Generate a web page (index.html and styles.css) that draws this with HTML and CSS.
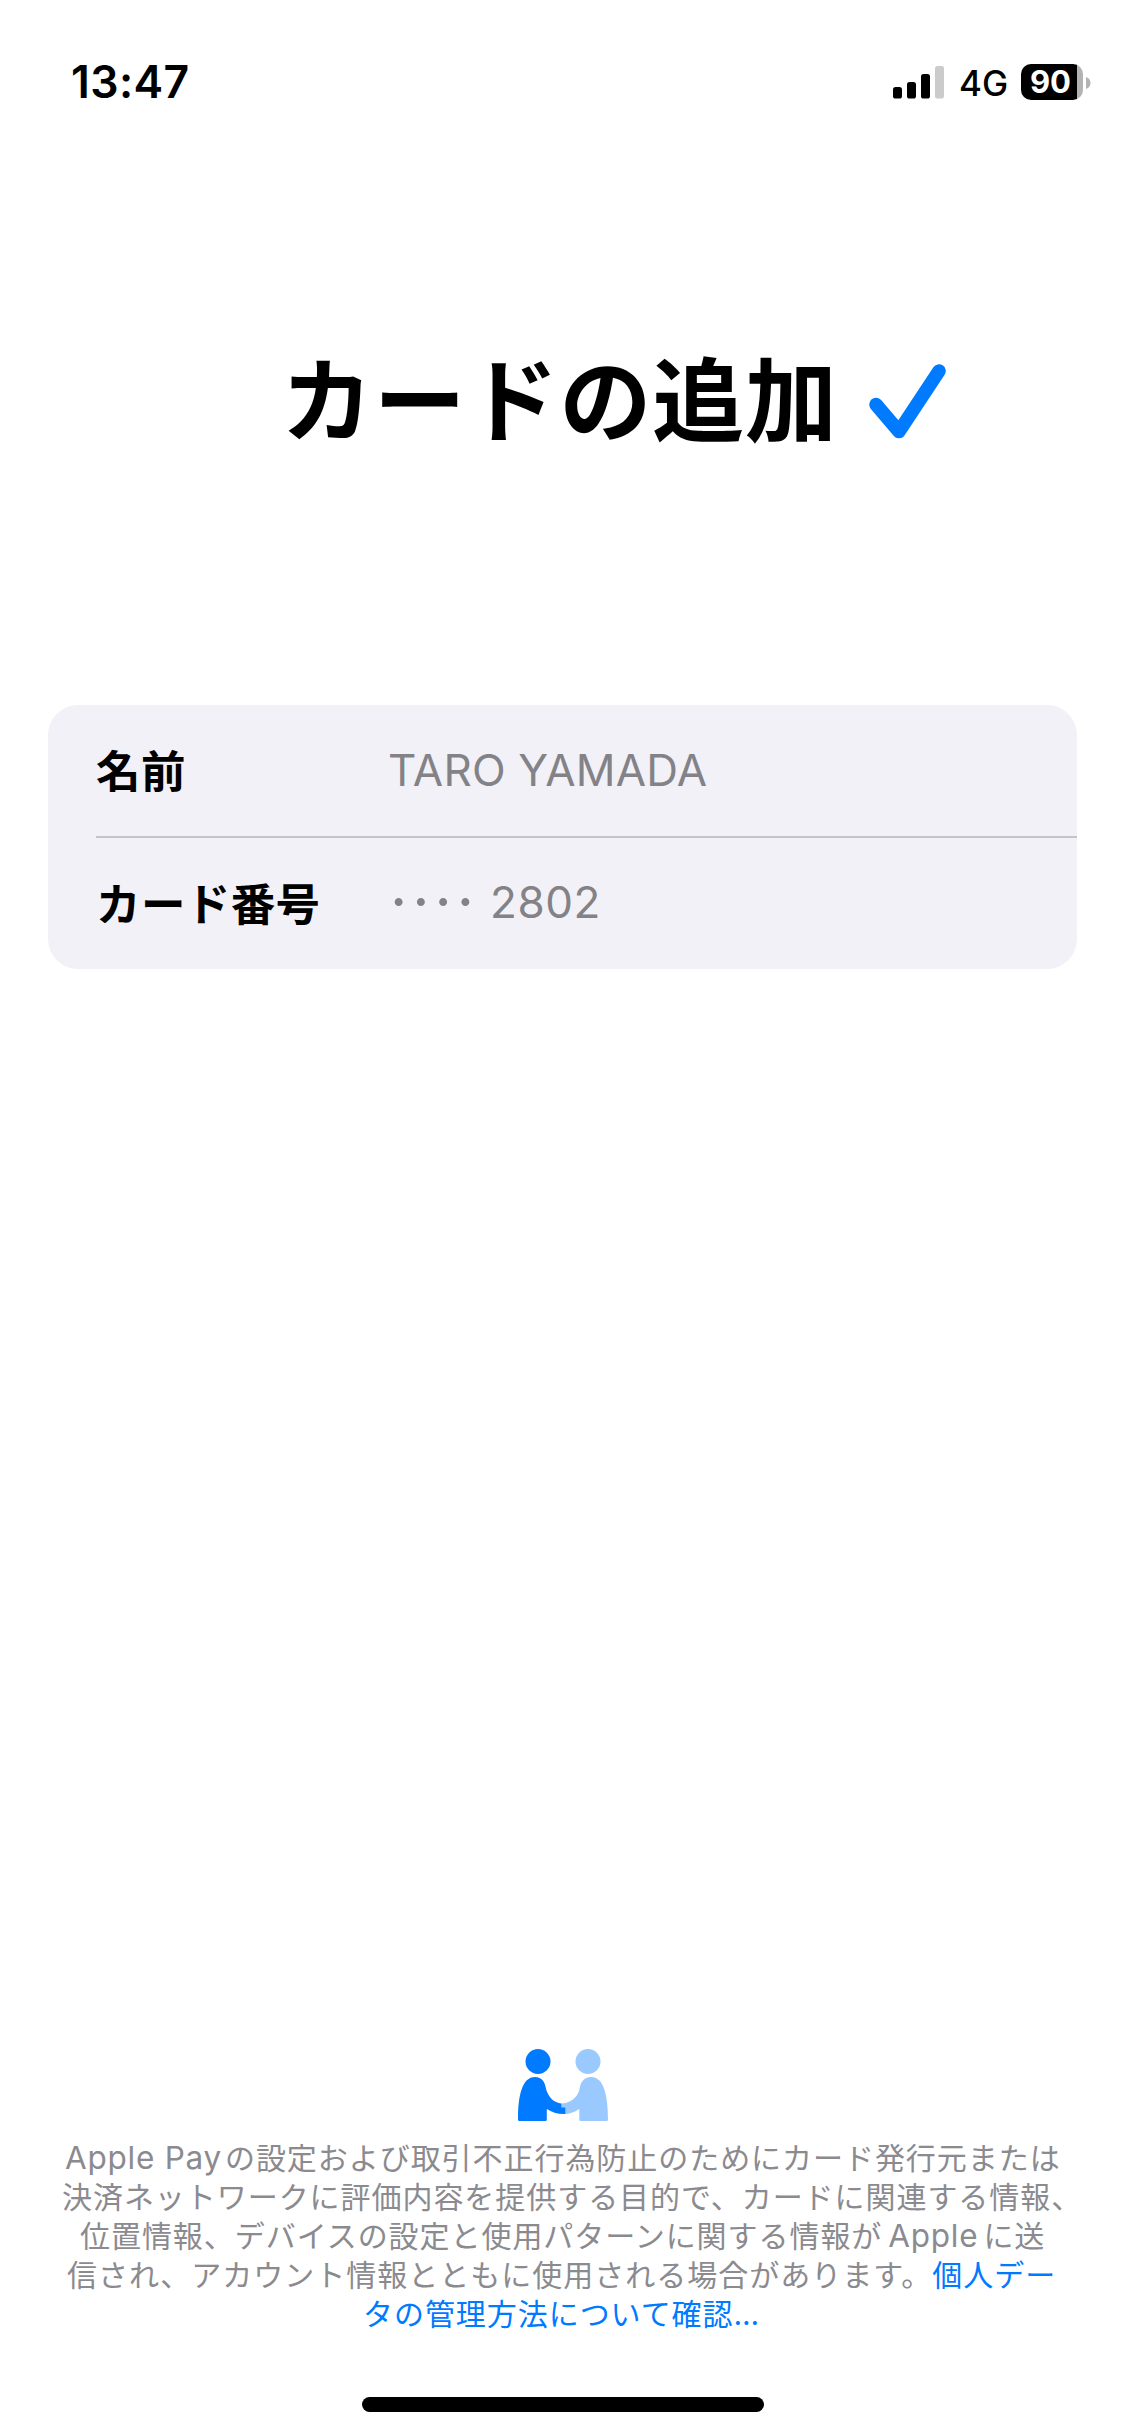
FILE: index.html
```html
<!DOCTYPE html>
<html lang="ja">
<head>
<meta charset="utf-8">
<title>カードの追加</title>
<link rel="stylesheet" href="styles.css">
</head>
<body>
<div class="screen">
  <header class="status">
    <div class="time">13:47</div>
    <div class="indicators">
      <svg class="signal" width="52" height="33" viewBox="0 0 52 33">
        <rect x="0" y="21" width="9" height="11.5" rx="2.6"/>
        <rect x="14" y="16" width="9" height="16.5" rx="2.6"/>
        <rect x="28" y="8" width="9" height="24.5" rx="2.6"/>
        <rect x="42" y="0" width="9" height="32.5" rx="2.6" fill="#cbcbcb"/>
      </svg>
      <span class="network">4G</span>
      <div class="battery"><span class="level">90</span></div>
      <svg class="nub" width="5" height="12" viewBox="0 0 5 12"><path d="M0 0C3 1 4.500 3.300 4.500 6S3 11 0 12Z" fill="#b3b3b3"/></svg>
    </div>
  </header>
  <main class="content">
    <h1 class="title"><span class="title-text">カードの追加</span>
      <svg class="check" width="78" height="77" viewBox="0 0 78 77"><path d="M7 40.500L30 67.500L70 7" fill="none" stroke="#007aff" stroke-width="13.500" stroke-linecap="round" stroke-linejoin="round"/></svg>
    </h1>
    <dl class="card">
      <div class="row"><dt>名前</dt><dd>TARO YAMADA</dd></div>
      <div class="row"><dt>カード番号</dt><dd class="number"><span class="dots">····</span><span>2802</span></dd></div>
    </dl>
  </main>
  <footer class="privacy">
    <svg class="people" width="90" height="72" viewBox="0 0 90 72">
      <g fill="#99c9ff">
        <circle cx="70" cy="12.500" r="12.500"/>
        <path d="M43 54.500C52 54.500 59 49 61.300 41C62.500 33 66 28 73 28C86 28 90 47 90 70.500Q90 72 88.500 72H62.500Q61.300 72 61.300 70.500V60C56 63.500 51 65 47 65H43Z"/>
      </g>
      <g fill="#007aff">
        <circle cx="20" cy="12.500" r="12.500"/>
        <path d="M0 70.500C0 47 4 28 17 28C24 28 27 33 28.300 41C31 49 36 53.500 43.300 54.500V58.500H47.300V65C41 65.500 34 63.500 28.800 60V70.500Q28.800 72 27.300 72H1.500Q0 72 0 70.500Z"/>
      </g>
    </svg>
    <p class="notice">
      <span class="line l1"><span class="latin pay">Apple Pay</span>の設定および取引不正行為防止のためにカード発行元または</span>
      <span class="line l2">決済ネットワークに評価内容を提供する目的で、カードに関連する情報、</span>
      <span class="line l3">位置情報、デバイスの設定と使用パターンに関する情報が<span class="latin apple">Apple</span>に送</span>
      <span class="line l4">信され、アカウント情報とともに使用される場合があります。<a class="link">個人デー</a></span>
      <span class="line l5"><a class="link">タの管理方法について確認<span class="ellipsis">...</span></a></span>
    </p>
    <div class="home"></div>
  </footer>
</div>
</body>
</html>
```
FILE: styles.css
```css
* { box-sizing: border-box; margin: 0; padding: 0; }
body {
  background: #fff;
  color: #000;
  font-family: Inter, "Noto Sans CJK JP", sans-serif;
}
.screen { width: 1125px; height: 2436px; display: flex; flex-direction: column; overflow: hidden; }

.status { height: 132px; padding: 32px 34px 0 71px; display: flex; justify-content: space-between; align-items: flex-start; }
.time { margin-top: 24px; line-height: 52px; font-size: 44.5px; font-weight: 600; letter-spacing: .4px; }
.indicators { display: flex; align-items: center; height: 36px; margin-top: 32px; }
.signal { margin-right: 14px; margin-top: 1px; }
.network { width: 62px; font-size: 35px; line-height: 36px; font-weight: 450; margin-top: 2px; }
.battery {
  width: 62px; height: 36px; border-radius: 10px; padding-right: 3px;
  background: linear-gradient(90deg, #000 56px, #b3b3b3 56px);
  display: flex; justify-content: center; align-items: center;
}
.level { color: #fff; font-size: 31px; font-weight: 700; line-height: 36px; }
.nub { margin-left: 3px; margin-top: 1px; }

.content { padding: 216px 48px 0; }
.title { display: flex; height: 136px; padding-left: 233px; font-size: 92px; font-weight: 700; line-height: 108px; white-space: nowrap; }
.title-text { width: 557px; letter-spacing: .8px; }
.check { margin: 16px 0 0 31px; }

.card { margin-top: 221px; height: 264px; border-radius: 30px; background: #f2f1f7; padding-left: 48px; }
.row { display: flex; align-items: center; height: 131px; }
.row + .row { border-top: 2px solid #c4c4c9; height: 133px; }
dt { width: 292px; font-size: 44.5px; line-height: 60px; font-weight: 700; letter-spacing: .4px; padding: 3px 0 0; }
dd { font-size: 44px; line-height: 60px; color: #838287; letter-spacing: .2px; padding-bottom: 2px; }
.number { display: flex; letter-spacing: .6px; padding-bottom: 4px; }
.dots { width: 102px; padding-left: 2px; font-size: 60px; line-height: 58px; font-weight: 400; letter-spacing: 5px; }

.privacy { margin-top: auto; display: flex; flex-direction: column; align-items: center; }
.people { display: block; }
.notice { width: 1125px; margin-top: 18px; font-size: 30px; line-height: 39px; color: #8b8a8f; letter-spacing: .95px; }
.line { display: block; white-space: nowrap; height: 39px; }
.l1 { padding-left: 65px; }
.l2 { padding-left: 62px; }
.l3 { padding-left: 80px; }
.l4 { padding-left: 67px; letter-spacing: 1px; }
.l5 { padding-left: 363px; }
.latin { font-size: 31.5px; line-height: 1; letter-spacing: .75px; }
.pay { margin-right: 3px; }
.apple { margin: 0 5px 0 6px; }
.ellipsis { letter-spacing: -.1px; }
.link { color: #007aff; }
.home { width: 402px; height: 15px; border-radius: 8px; background: #000; margin: 63px 0 24px; }
```
